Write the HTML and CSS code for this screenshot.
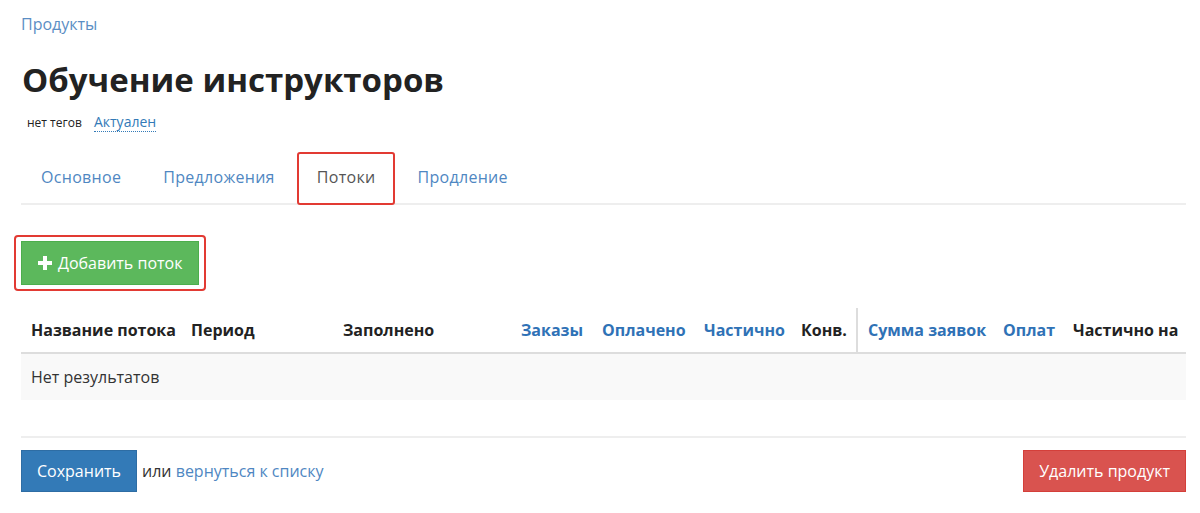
FILE: index.html
```html
<!DOCTYPE html>
<html lang="ru">
<head>
    <meta charset="UTF-8">
    <meta name="viewport" content="width=device-width, initial-scale=1.0">
    <title>Обучение инструкторов</title>
    <link rel="stylesheet" href="styles.css">
</head>
<body>
    <div class="page">
        <div class="breadcrumb"><a href="#">Продукты</a></div>
        <h1 class="title">Обучение инструкторов</h1>
        <div class="tags">
            <span class="no-tags">нет тегов</span>
            <a href="#" class="status">Актуален</a>
        </div>

        <ul class="tabs">
            <li><a href="#">Основное</a></li>
            <li><a href="#">Предложения</a></li>
            <li class="active marked"><a href="#">Потоки</a></li>
            <li><a href="#">Продление</a></li>
        </ul>

        <div class="toolbar">
            <span class="marked-box">
                <button class="btn btn-green">
                    <svg class="plus" viewBox="0 0 14 14" width="14" height="14"><path d="M5 0h4v5h5v4H9v5H5V9H0V5h5z" fill="#fff"/></svg>
                    Добавить поток
                </button>
            </span>
        </div>

        <table class="streams">
            <colgroup>
                <col style="width:160px">
                <col style="width:152px">
                <col style="width:178px">
                <col style="width:81px">
                <col style="width:102px">
                <col style="width:97px">
                <col style="width:66px">
                <col style="width:136px">
                <col style="width:70px">
                <col>
            </colgroup>
            <thead>
                <tr>
                    <th>Название потока</th>
                    <th>Период</th>
                    <th>Заполнено</th>
                    <th><a href="#">Заказы</a></th>
                    <th><a href="#">Оплачено</a></th>
                    <th><a href="#">Частично</a></th>
                    <th class="split">Конв.</th>
                    <th><a href="#">Сумма заявок</a></th>
                    <th><a href="#">Оплат</a></th>
                    <th>Частично на</th>
                </tr>
            </thead>
            <tbody>
                <tr><td colspan="10">Нет результатов</td></tr>
            </tbody>
        </table>

        <div class="footer">
            <div class="footer-left">
                <button class="btn btn-blue">Сохранить</button>
                <span class="or">или <a href="#">вернуться к списку</a></span>
            </div>
            <button class="btn btn-red">Удалить продукт</button>
        </div>
    </div>
</body>
</html>
```

FILE: styles.css
```css
body {
    margin: 0;
    font-family: "Open Sans", "Noto Sans", sans-serif;
    font-size: 16px;
    color: #333;
    background: #fff;
}
a {
    color: #337ab7;
    text-decoration: none;
}
.page {
    padding: 12px 14px 0 21px;
}
.breadcrumb {
    font-size: 16px;
    line-height: 24px;
}
.breadcrumb a {
    color: #5b8ec4;
}
.title {
    margin: 22px 0 0 1px;
    font-size: 33px;
    font-weight: 700;
    line-height: 44px;
    color: #222;
}
.tags {
    margin: 7px 0 0 6px;
    line-height: 24px;
}
.no-tags {
    font-size: 12px;
    color: #222;
    margin-right: 8px;
}
.status {
    font-size: 14px;
    border-bottom: 1px dotted #337ab7;
}

/* tabs */
.tabs {
    list-style: none;
    margin: 17px 0 0;
    padding: 0;
    display: flex;
    border-bottom: 2px solid #eee;
}
.tabs li {
    margin-right: 2px;
}
.tabs a {
    display: block;
    padding: 14px 20px;
    font-size: 16px;
    letter-spacing: 0.3px;
    line-height: 23px;
    color: #4f87c2;
}
.tabs .active a {
    color: #555;
}
.marked {
    position: relative;
}
.marked::after {
    content: "";
    position: absolute;
    left: 0;
    right: 0;
    top: 0;
    bottom: -2px;
    border: 2px solid #e23a33;
    border-radius: 3px;
}

/* add button */
.toolbar {
    margin-top: 30px;
}
.marked-box {
    display: inline-block;
    margin-left: -7px;
    padding: 4px 5px;
    border: 2px solid #e23a33;
    border-radius: 4px;
}
.btn {
    font-family: inherit;
    font-size: 16px;
    line-height: 22px;
    color: #fff;
    border: 1px solid transparent;
    border-radius: 0;
    padding: 10px 16px;
    cursor: pointer;
}
.btn-green {
    display: flex;
    align-items: center;
    gap: 6px;
    background: #5cb85c;
    border-color: #4cae4c;
}
.btn-blue {
    background: #337ab7;
    border-color: #2e6da4;
}
.btn-red {
    background: #d9534f;
    border-color: #d43f3a;
}

/* table */
.streams {
    width: 100%;
    margin-top: 17px;
    border-collapse: collapse;
    table-layout: fixed;
}
.streams th {
    text-align: left;
    font-weight: 700;
    padding: 11px 10px;
    line-height: 22px;
    border-bottom: 2px solid #ddd;
    white-space: nowrap;
    overflow: hidden;
    color: #222;
}
.streams th a {
    color: #2f72b6;
}
.streams th.split {
    border-right: 2px solid #ddd;
}
.streams td {
    background: #f9f9f9;
    padding: 12px 10px;
    line-height: 22px;
}

/* footer */
.footer {
    margin-top: 36px;
    padding-top: 12px;
    border-top: 2px solid #eee;
    display: flex;
    justify-content: space-between;
    align-items: center;
}
.footer-left {
    display: flex;
    align-items: center;
    gap: 5px;
}
.footer .btn {
    padding: 9px 15px;
}
.or a {
    color: #4f87c2;
}
```
